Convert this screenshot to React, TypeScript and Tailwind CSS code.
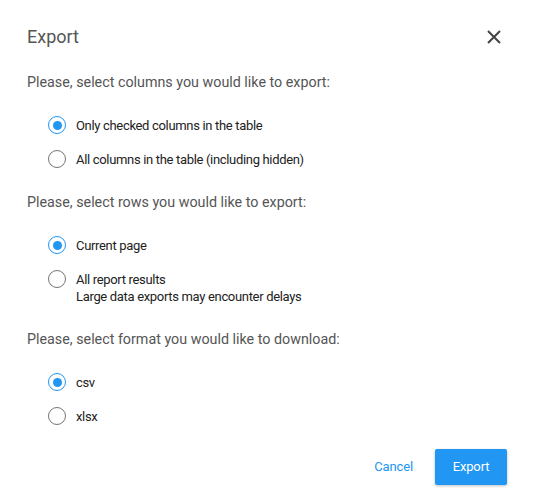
import { useState } from "react"

function Radio({ checked, onClick }: { checked: boolean; onClick: () => void }) {
  return (
    <button
      onClick={onClick}
      className={
        checked
          ? "w-[18px] h-[18px] shrink-0 rounded-full border-[1.5px] border-[#2196f3] flex items-center justify-center"
          : "w-[18px] h-[18px] shrink-0 rounded-full border-[1.5px] border-[#757575] flex items-center justify-center"
      }
    >
      {checked && <span className="w-[9px] h-[9px] rounded-full bg-[#2196f3]" />}
    </button>
  )
}

function Option({ checked, onClick, label, sub }: { checked: boolean; onClick: () => void; label: string; sub?: string }) {
  return (
    <div className="flex items-start gap-[10px] py-2 pl-[21px]">
      <Radio checked={checked} onClick={onClick} />
      <div className="text-[13px] leading-[17px] tracking-[-0.025em] text-[#222] pt-[1px]">
        <div>{label}</div>
        {sub && <div>{sub}</div>}
      </div>
    </div>
  )
}

export default function App() {
  const [cols, setCols] = useState("checked")
  const [rows, setRows] = useState("page")
  const [format, setFormat] = useState("csv")

  return (
    <div className="w-[533px] h-[502px] bg-white px-[27px] pt-6" style={{ fontFamily: "Roboto, 'Liberation Sans', sans-serif" }}>
      {/* header */}
      <div className="flex items-center justify-between h-[26px]">
        <h1 className="text-[18px] leading-[26px] text-[#555]">Export</h1>
        <button className="mr-[5px]">
          <svg width="14" height="14" viewBox="0 0 14 14">
            <path d="M1 1 L13 13 M13 1 L1 13" stroke="#444" strokeWidth="2" />
          </svg>
        </button>
      </div>

      {/* columns */}
      <p className="mt-[22px] text-[14.3px] leading-5 text-[#555]">Please, select columns you would like to export:</p>
      <div className="mt-4">
        <Option checked={cols === "checked"} onClick={() => setCols("checked")} label="Only checked columns in the table" />
        <Option checked={cols === "all"} onClick={() => setCols("all")} label="All columns in the table (including hidden)" />
      </div>

      {/* rows */}
      <p className="mt-4 text-[14.3px] leading-5 text-[#555]">Please, select rows you would like to export:</p>
      <div className="mt-4">
        <Option checked={rows === "page"} onClick={() => setRows("page")} label="Current page" />
        <Option
          checked={rows === "all"}
          onClick={() => setRows("all")}
          label="All report results"
          sub="Large data exports may encounter delays"
        />
      </div>

      {/* format */}
      <p className="mt-4 text-[14.3px] leading-5 text-[#555]">Please, select format you would like to download:</p>
      <div className="mt-4">
        <Option checked={format === "csv"} onClick={() => setFormat("csv")} label="csv" />
        <Option checked={format === "xlsx"} onClick={() => setFormat("xlsx")} label="xlsx" />
      </div>

      <div className="mt-4 flex items-center justify-end gap-[22px]">
        <button className="text-[13px] tracking-[-0.01em] text-[#2196f3]">Cancel</button>
        <button className="w-[72px] h-9 rounded-[2px] bg-[#2196f3] text-white text-[13px] tracking-[-0.01em] shadow-[0_1px_3px_rgba(0,0,0,0.25)] mr-[-1px]">
          Export
        </button>
      </div>
    </div>
  )
}
